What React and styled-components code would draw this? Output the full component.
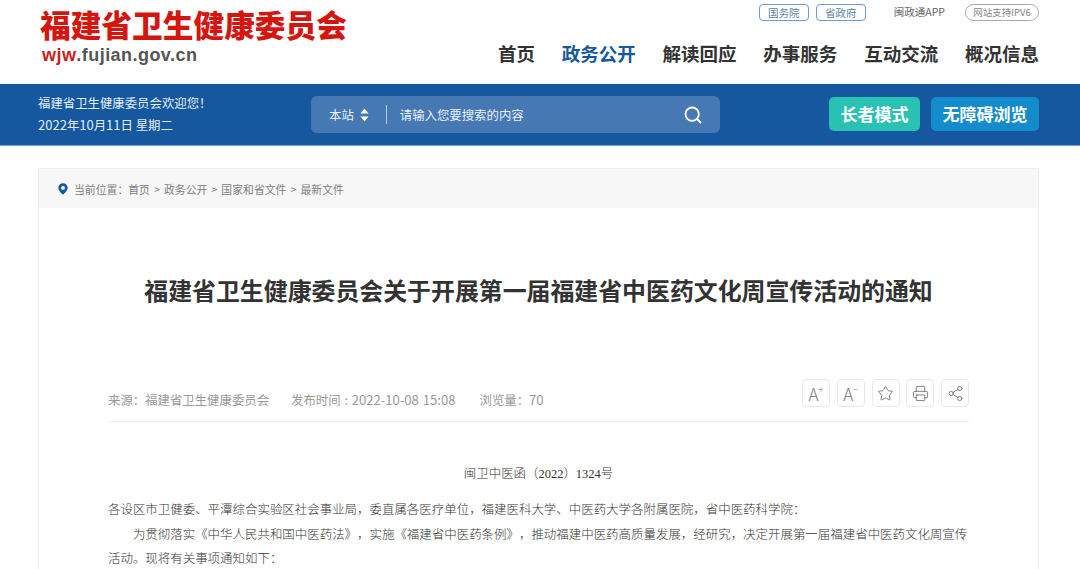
import React from 'react';
import styled, { createGlobalStyle } from 'styled-components';
import { Star, Printer, Share2, Search } from 'lucide-react';

const cjk = '"Noto Sans CJK SC", "Liberation Sans", sans-serif';

const GlobalStyle = createGlobalStyle`
  html, body {
    margin: 0;
    padding: 0;
    height: 569px;
    overflow: hidden;
    background: #fff;
    font-family: ${cjk};
    text-spacing-trim: space-all;
  }
  * {
    box-sizing: border-box;
  }
`;

const navItems = ['首页', '政务公开', '解读回应', '办事服务', '互动交流', '概况信息'];
const crumbs = ['首页', '政务公开', '国家和省文件', '最新文件'];

const App = () => {
  return (
    <>
      <GlobalStyle />
      <Header>
        <Logo>
          <LogoTitle>福建省卫生健康委员会</LogoTitle>
          <LogoUrl>
            <b>wjw</b>.fujian.gov.cn
          </LogoUrl>
        </Logo>
        <HeaderRight>
          <TopLinks>
            <TagLink>国务院</TagLink>
            <TagLink>省政府</TagLink>
            <AppLink>闽政通APP</AppLink>
            <IpvTag>网站支持IPV6</IpvTag>
          </TopLinks>
          <Nav>
            {navItems.map((item) => (
              <NavItem key={item} $active={item === '政务公开'}>
                {item}
              </NavItem>
            ))}
          </Nav>
        </HeaderRight>
      </Header>

      <Band>
        <Welcome>
          <p>福建省卫生健康委员会欢迎您！</p>
          <p><Num>2022</Num>年<Num>10</Num>月<Num>11</Num>日 星期二</p>
        </Welcome>
        <SearchBox>
          <Scope>
            本站
            <svg width="9" height="14" viewBox="0 0 9 14" fill="#fff">
              <path d="M4.5 0.5 L8.5 5.5 H0.5 Z" />
              <path d="M4.5 13.5 L8.5 8.5 H0.5 Z" />
            </svg>
          </Scope>
          <Divider />
          <Placeholder>请输入您要搜索的内容</Placeholder>
          <Search size={20} color="#fff" strokeWidth={2.2} />
        </SearchBox>
        <ModeButtons>
          <ModeButton $bg="#29c2b2" $w={91}>长者模式</ModeButton>
          <ModeButton $bg="#148ccb" $w={108}>无障碍浏览</ModeButton>
        </ModeButtons>
      </Band>

      <Panel>
        <Crumbs>
          <svg width="10" height="12" viewBox="0 0 12 14">
            <path
              fillRule="evenodd"
              fill="#15589f"
              d="M6 0a5.6 5.6 0 0 0-5.6 5.6C.4 9.4 6 14 6 14s5.6-4.6 5.6-8.4A5.6 5.6 0 0 0 6 0zm0 3.4a2.3 2.3 0 1 1 0 4.6 2.3 2.3 0 0 1 0-4.6z"
            />
          </svg>
          <CrumbText>
            当前位置：
            {crumbs.map((c, i) => (
              <React.Fragment key={c}>
                {i > 0 && <Sep>&gt;</Sep>}
                {c}
              </React.Fragment>
            ))}
          </CrumbText>
        </Crumbs>

        <Article>
          <Title>福建省卫生健康委员会关于开展第一届福建省中医药文化周宣传活动的通知</Title>
          <MetaRow>
            <Meta>
              <span>来源：福建省卫生健康委员会</span>
              <span>发布时间 : <MetaNum>2022-10-08 15:08</MetaNum></span>
              <span>浏览量：<MetaNum>70</MetaNum></span>
            </Meta>
            <Tools>
              <Tool>A<sup>+</sup></Tool>
              <Tool>A<sup>−</sup></Tool>
              <Tool><Star size={17} strokeWidth={1.3} /></Tool>
              <Tool><Printer size={17} strokeWidth={1.3} /></Tool>
              <Tool><Share2 size={17} strokeWidth={1.3} /></Tool>
            </Tools>
          </MetaRow>
          <DocNo>闽卫中医函（2022）1324号</DocNo>
          <Para>各设区市卫健委、平潭综合实验区社会事业局，委直属各医疗单位，福建医科大学、中医药大学各附属医院，省中医药科学院：</Para>
          <Para $indent>为贯彻落实《中华人民共和国中医药法》，实施《福建省中医药条例》，推动福建中医药高质量发展，经研究，决定开展第一届福建省中医药文化周宣传活动。现将有关事项通知如下：</Para>
        </Article>
      </Panel>
    </>
  );
};

const Num = styled.span`
  font-size: 13px;
`;

const MetaNum = styled.span`
  font-size: 13.1px;
`;

const Header = styled.header`
  height: 84px;
  padding: 0 41px 0 40px;
  display: flex;
  justify-content: space-between;
  background: #fff;
`;

const Logo = styled.div`
  padding-top: 6px;
`;

const LogoTitle = styled.div`
  font-size: 30.7px;
  line-height: 36px;
  font-weight: 900;
  color: #d5160f;
  white-space: nowrap;
`;

const LogoUrl = styled.div`
  margin: 3px 0 0 2px;
  font-family: "Liberation Sans", sans-serif;
  font-size: 18px;
  line-height: 20px;
  letter-spacing: 0.45px;
  color: #555;
  font-weight: 700;
  b {
    color: #c8201a;
  }
`;

const HeaderRight = styled.div`
  display: flex;
  flex-direction: column;
  align-items: flex-end;
`;

const TopLinks = styled.div`
  height: 26px;
  padding-top: 4px;
  display: flex;
  align-items: flex-start;
`;

const TagLink = styled.span`
  width: 50px;
  height: 17px;
  margin-right: 7px;
  border: 1px solid #6f9ccb;
  border-radius: 4px;
  font-size: 10.5px;
  line-height: 15px;
  text-align: center;
  color: #5a7fa8;
`;

const AppLink = styled.span`
  margin: 0 20px 0 21px;
  font-size: 10.5px;
  line-height: 15px;
  color: #666;
`;

const IpvTag = styled.span`
  width: 74px;
  height: 17px;
  border: 1px solid #aaa;
  border-radius: 9px;
  font-size: 9.5px;
  line-height: 15px;
  text-align: center;
  color: #888;
`;

const Nav = styled.nav`
  margin-top: 13px;
  display: flex;
  gap: 26.8px;
`;

const NavItem = styled.a`
  font-size: 18.5px;
  line-height: 28px;
  font-weight: 700;
  color: ${(p) => (p.$active ? '#15589f' : '#333')};
`;

const Band = styled.section`
  height: 62px;
  padding: 0 41px 0 38px;
  display: flex;
  align-items: center;
  background: #15589f;
  border-bottom: 1px solid #7fa3cc;
`;

const Welcome = styled.div`
  width: 273px;
  color: #e4edf6;
  font-size: 12.4px;
  line-height: 21px;
  p {
    margin: 0;
  }
`;

const SearchBox = styled.div`
  width: 409px;
  height: 37px;
  padding: 0 17px 0 18px;
  display: flex;
  align-items: center;
  background: #4679b4;
  border-radius: 6px;
  color: #e9f0f7;
  font-size: 12.4px;
`;

const Scope = styled.span`
  display: flex;
  align-items: center;
  gap: 6px;
`;

const Divider = styled.i`
  width: 1px;
  height: 19px;
  margin: 0 13px 0 17px;
  background: #b6cbe2;
`;

const Placeholder = styled.span`
  flex: 1;
`;

const ModeButtons = styled.div`
  margin-left: auto;
  margin-bottom: 2px;
  display: flex;
  gap: 11px;
`;

const ModeButton = styled.button`
  width: ${(p) => p.$w}px;
  height: 34px;
  padding: 0;
  border: 0;
  border-radius: 5px;
  background: ${(p) => p.$bg};
  color: #fff;
  font-family: ${cjk};
  font-size: 17px;
  font-weight: 700;
`;

const Panel = styled.main`
  width: 1001px;
  margin: 22px 0 0 38px;
  border: 1px solid #eee;
  border-bottom: 0;
`;

const Crumbs = styled.div`
  height: 39px;
  padding-left: 19px;
  display: flex;
  align-items: center;
  gap: 6px;
  background: #f7f7f7;
`;

const CrumbText = styled.span`
  font-size: 10.85px;
  color: #808080;
`;

const Sep = styled.span`
  margin: 0 4px;
`;

const Article = styled.article`
  padding: 0 69px;
`;

const Title = styled.h1`
  margin: 63px 0 0;
  font-size: 23.9px;
  line-height: 38px;
  font-weight: 700;
  text-align: center;
  color: #333;
  white-space: nowrap;
`;

const MetaRow = styled.div`
  margin-top: 70px;
  height: 43px;
  display: flex;
  justify-content: space-between;
  border-bottom: 1px solid #eee;
`;

const Meta = styled.div`
  display: flex;
  gap: 22px;
  padding-top: 11px;
  font-size: 12.4px;
  line-height: 20px;
  word-spacing: 1px;
  color: #999;
  & > :last-child {
    margin-left: 2px;
  }
`;

const Tools = styled.div`
  display: flex;
  gap: 6.75px;
  height: 28px;
`;

const Tool = styled.span`
  width: 28px;
  height: 28px;
  border: 1px solid #e8e8e8;
  border-radius: 4px;
  display: flex;
  align-items: center;
  justify-content: center;
  font-size: 17px;
  font-weight: 300;
  color: #777;
  sup {
    font-size: 9px;
    line-height: 1;
    margin-bottom: 7px;
  }
`;

const DocNo = styled.p`
  margin: 40px 0 0;
  font-family: "Liberation Serif", "Noto Sans CJK SC", serif;
  font-size: 12.46px;
  font-weight: 300;
  line-height: 24.4px;
  text-align: center;
  color: #333;
`;

const Para = styled.p`
  margin: 0;
  font-size: 12.46px;
  font-weight: 300;
  line-height: 24.4px;
  color: #333;
  text-indent: ${(p) => (p.$indent ? '2em' : '0')};
  &:nth-of-type(2) {
    margin-top: 11px;
  }
`;

export default App;
